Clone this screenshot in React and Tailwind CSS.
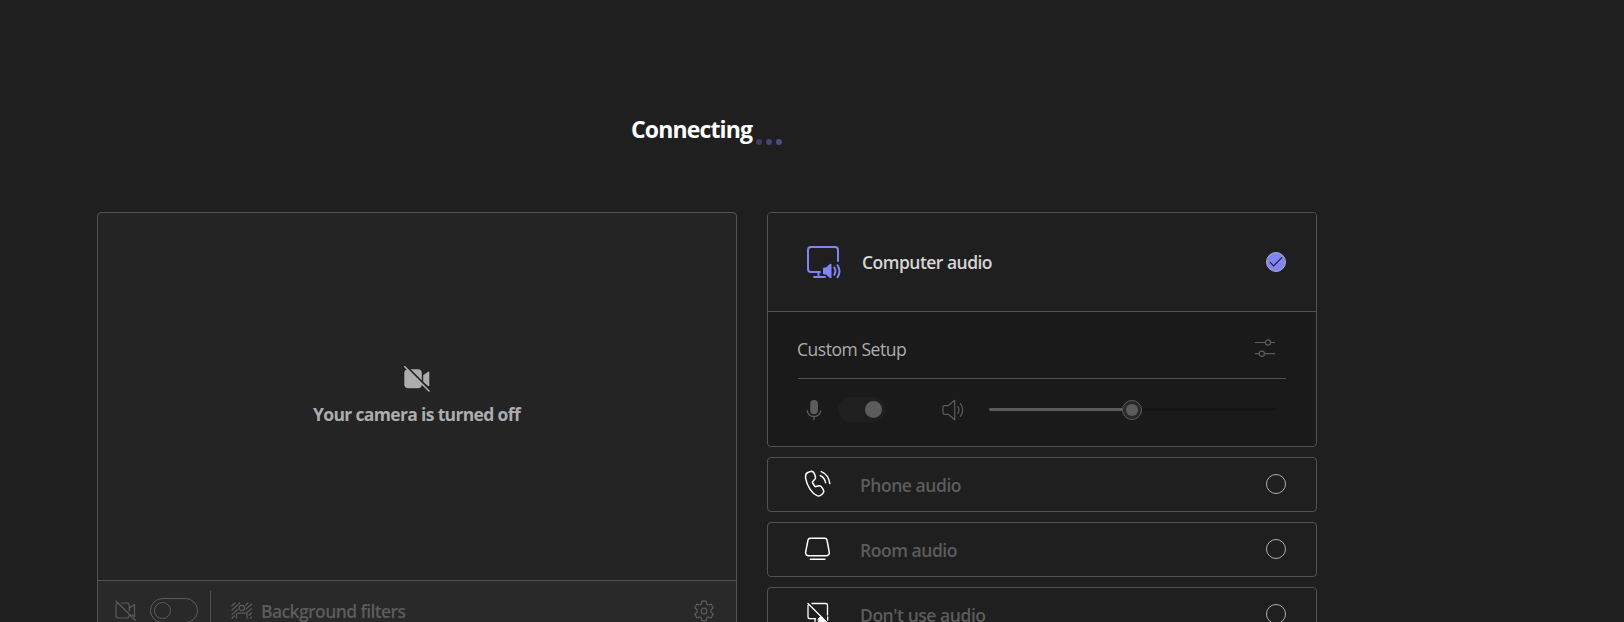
function MonitorSpeaker() {
  return (
    <svg width="34" height="34" viewBox="0 0 34 34" fill="none" stroke="#7f85f5" strokeWidth="2" strokeLinecap="round" strokeLinejoin="round">
      <path d="M31 15V4a3 3 0 0 0-3-3H4a3 3 0 0 0-3 3v19a3 3 0 0 0 3 3h9M11.5 26v5M7 31h11" />
      <path d="M17 22.5h2.5l4-3.8v12.6l-4-3.8H17z" fill="#7f85f5" />
      <path d="M27.3 21.5c1.4 2.2 1.4 5 0 7.2M30.5 19.3c2.4 3.6 2.4 8.4 0 12" />
    </svg>
  );
}

function Sliders() {
  return (
    <svg width="20" height="20" viewBox="0 0 20 20" fill="none" stroke="#5c5c5c" strokeWidth="1.2">
      <path d="M0 4.5h10.4M15.6 4.5H20M0 15.700h4.2M9.400 15.700H20" />
      <circle cx="13" cy="4.5" r="2.6" />
      <circle cx="6.8" cy="15.700" r="2.6" />
    </svg>
  );
}

function Mic() {
  return (
    <svg width="16" height="22" viewBox="0 0 16 22" fill="none">
      <rect x="4.2" y="1" width="7.8" height="14.2" rx="3.9" fill="#5c5c5c" />
      <path d="M1.2 11.2a6.8 6.3 0 0 0 13.6 0M8 17.5V21" stroke="#5c5c5c" strokeWidth="1.3" />
    </svg>
  );
}

function Speaker() {
  return (
    <svg width="22" height="22" viewBox="0 0 22 22" fill="none" stroke="#5c5c5c" strokeWidth="1.2" strokeLinejoin="round" strokeLinecap="round">
      <path d="M2.4 6.7h3.8l6.5-5.4v19.4l-6.5-5.4H2.4a1.4 1.4 0 0 1-1.4-1.4V8.1a1.4 1.4 0 0 1 1.4-1.4z" />
      <path d="M15.8 7.7c1.5 2 1.5 4.6 0 6.6M18.3 4.7c3.2 3.6 3.2 9 0 12.6" />
    </svg>
  );
}

function Phone() {
  return (
    <svg width="28" height="28" viewBox="0 0 28 28" fill="none" stroke="#fff" strokeWidth="1.5" strokeLinecap="round" strokeLinejoin="round">
      <path d="M4.300 2.200 6 1.600C8 1 9.500 1.800 10.200 3.300l1 2.600c.6 1.500.3 3-.9 4L8.900 11.300c-.4.3-.5.7-.3 1.200.5 1.400 1.200 2.600 2.200 3.700.3.400.8.500 1.200.4l2.200-.6c1.400-.4 2.700 0 3.500 1.200l1.400 2.200c.9 1.400.7 3.100-.5 4.300l-1.100 1c-1.200 1.100-2.900 1.500-4.500.9C8 23.500 3 16 1.700 8.700 1.300 6 1.800 3 4.300 2.200z" />
      <path d="M16.300 5.600c2.800 1.300 4.800 3.900 5.300 7.200M17.300 1.600c4.500 1.900 7.800 6.500 8.500 12" />
    </svg>
  );
}

function Room() {
  return (
    <svg width="28" height="28" viewBox="0 0 28 28" fill="none" stroke="#fff" strokeWidth="1.500" strokeLinecap="round" strokeLinejoin="round">
      <path d="M6.300 3.200h14.400a2.400 2.400 0 0 1 2.300 1.800l2.300 12.400a3 3 0 0 1-3 3.400H4.600a3 3 0 0 1-3-3.400L4 5a2.400 2.400 0 0 1 2.300-1.800zM6.300 24.200h14.600" />
    </svg>
  );
}

function NoAudio() {
  return (
    <svg width="28" height="28" viewBox="0 0 28 28" fill="none" stroke="#fff" strokeWidth="1.300" strokeLinecap="round" strokeLinejoin="round">
      <path d="M8 3.500h13.700a1.800 1.800 0 0 1 1.800 1.800V15M4 5.500v11.200a2 2 0 0 0 2 2h5.500M4 3.500l20 20M11 19v4.500M8 23.500h6" />
      <path d="M14.500 18.500l2.200-2 3.800 3.800v4l-3.500-2.500h-2.500z" fill="#fff" strokeWidth="0.800" />
      <path d="M23.700 17v3" />
    </svg>
  );
}

function CameraOffFilled() {
  return (
    <svg width="26" height="26" viewBox="0 0 26 26">
      <rect x="0.300" y="3.300" width="17.500" height="19" rx="4" fill="#adadad" />
      <path d="M19.200 9.300 24 5.700c.600-.4 1.300 0 1.300.7v13c0 .7-.7 1.100-1.300.7l-4.800-3.500z" fill="#adadad" />
      <path d="M2 0 26 24" stroke="#242424" strokeWidth="2" />
      <path d="M.8.8 25 25" stroke="#adadad" strokeWidth="1.600" strokeLinecap="round" />
    </svg>
  );
}

function CameraOff() {
  return (
    <svg width="22" height="22" viewBox="0 0 22 22" fill="none" stroke="#5c5c5c" strokeWidth="1.200" strokeLinecap="round" strokeLinejoin="round">
      <path d="M6.500 3h5.300a2.500 2.500 0 0 1 2.500 2.500V11M14.300 14v1.500a2.500 2.500 0 0 1-2.500 2.500H3.500A2.500 2.500 0 0 1 1 15.500v-10A2.500 2.500 0 0 1 3 3.100M14.500 8l5-3.600v12.200l-2.500-1.700M1 1l19.500 19.500" />
    </svg>
  );
}

function Filters() {
  return (
    <svg width="22" height="20" viewBox="0 0 22 20" fill="none" stroke="#5c5c5c" strokeWidth="1.200" strokeLinecap="round">
      <path d="M1 4.800 4 2M1 9.200 8.500 2M1 13.600 6.500 8.500M17 2l-2.500 2.200M20.500 3.200 15 8M20.500 7.600 16 11.500M20.500 12l-2.500 2.200M20.500 16.200l-1 .8M1 17.200l2.500-2.200" />
      <circle cx="10.800" cy="7" r="2.700" />
      <path d="M5.500 17v-3a1.800 1.800 0 0 1 1.800-1.800h7A1.800 1.800 0 0 1 16.100 14v3" />
    </svg>
  );
}

function Gear() {
  return (
    <svg width="22" height="22" viewBox="0 0 22 22" fill="none" stroke="#5c5c5c" strokeWidth="1.200" strokeLinejoin="round">
      <path d="M8.900 1.200h4.200l.7 3 1.300.8 3-.9 2.100 3.600-2.200 2.100v2.400l2.200 2.100-2.100 3.600-3-.9-1.300.8-.7 3H8.900l-.7-3-1.300-.8-3 .9-2.100-3.600L4 12.200V9.800L1.800 7.700l2.100-3.600 3 .9 1.300-.8z" />
      <circle cx="11" cy="11" r="2.900" />
    </svg>
  );
}

function Option({ icon, label }) {
  return (
    <div className="flex h-[55px] shrink-0 items-start rounded border border-[#525252] pr-[30px] pl-[36px]">
      <div className="mt-[12px] flex w-[56px]">{icon}</div>
      <span className="mt-[15px] text-[17.500px] leading-6 font-semibold tracking-[-0.450px] whitespace-nowrap text-[#5c5c5c]">{label}</span>
      <span className="mt-[16px] ml-auto size-5 rounded-full border border-[#adadad]" />
    </div>
  );
}

export default function App() {
  return (
    <div className="h-[622px] w-[1624px] overflow-hidden bg-[#1f1f1f] pl-[97px] font-['Open_Sans','Noto_Sans',sans-serif]">
      <header className="flex h-[212px] pt-[113px] pl-[534px]">
        <h1 className="h-8 text-[23px] leading-8 font-bold tracking-[-0.850px] whitespace-nowrap text-white">Connecting</h1>
        <div className="mt-[26px] ml-[4px] flex gap-1">
          <i className="h-[6px] w-[6px] rounded-full bg-[#3d3e66]" />
          <i className="h-[6px] w-[6px] rounded-full bg-[#444572]" />
          <i className="h-[6px] w-[6px] rounded-full bg-[#4b4d80]" />
        </div>
      </header>
      <main className="flex h-[410px] items-start gap-[30px]">
        <section className="flex h-[430px] w-[640px] flex-col overflow-hidden rounded border border-[#525252] bg-[#242424]">
          <div className="flex h-[367px] shrink-0 flex-col items-center pt-[153px] pr-[1px]">
            <CameraOffFilled />
            <p className="mt-[10px] text-[17.500px] leading-6 font-bold tracking-[-0.650px] whitespace-nowrap text-[#adadad]">Your camera is turned off</p>
          </div>
          <div className="flex h-[62px] items-start border-t border-[#525252] bg-[#292929] pl-[17px]">
            <div className="mt-[19px]"><CameraOff /></div>
            <div className="mt-[17px] ml-[13px] h-[25px] w-[48px] rounded-full border border-[#5c5c5c] p-[3px]">
              <div className="size-[17px] rounded-full border border-[#5c5c5c]" />
            </div>
            <div className="mt-[10px] ml-[12px] h-[52px] w-px bg-[#525252]" />
            <div className="mt-[20px] ml-[20px]"><Filters /></div>
            <span className="mt-[18px] ml-[8px] text-[17.500px] leading-6 font-semibold tracking-[-0.600px] whitespace-nowrap text-[#5c5c5c]">Background filters</span>
            <div className="mt-[19px] mr-[21px] ml-auto"><Gear /></div>
          </div>
        </section>
        <section className="flex w-[550px] flex-col gap-[10px]">
          <div className="h-[235px] shrink-0 overflow-hidden rounded border border-[#525252] bg-[#1a1a1a]">
            <div className="flex h-[99px] items-center border-b border-[#525252] bg-[#1f1f1f] pr-[30px] pl-[39px]">
              <div className="mt-[2px]"><MonitorSpeaker /></div>
              <span className="ml-[21px] text-[17.500px] font-semibold tracking-[-0.520px] whitespace-nowrap text-[#d6d6d6]">Computer audio</span>
              <span className="ml-auto flex size-5 items-center justify-center rounded-full border border-[#adadad] bg-[#7f85f5]">
                <svg width="14" height="12" viewBox="0 0 14 12" fill="none" stroke="#1f1f1f" strokeWidth="1.200"><path d="m1 6.200 3.600 3.600L13 1.400" /></svg>
              </span>
            </div>
            <div className="mx-[30px] flex h-[67px] items-center justify-between border-b border-[#525252] pr-[11px]">
              <span className="mt-[8px] -ml-px text-[17.500px] tracking-[-0.450px] text-[#adadad]">Custom Setup</span>
              <div className="mt-[6px]"><Sliders /></div>
            </div>
            <div className="flex h-[61px] items-center pr-[40px] pl-[38px]">
              <Mic />
              <div className="ml-[16px] flex h-[25px] w-[48px] items-center justify-end rounded-full bg-[#1f1f1f] pr-[4px]">
                <div className="size-[17px] rounded-full bg-[#5c5c5c]" />
              </div>
              <div className="ml-[56px]"><Speaker /></div>
              <div className="ml-[25px] flex flex-1 items-center">
                <div className="h-[3px] w-[133px] rounded-l-full bg-[#5c5c5c]" />
                <div className="flex size-5 shrink-0 items-center justify-center rounded-full border border-[#5c5c5c] bg-[#292929]">
                  <div className="size-[12px] rounded-full bg-[#5c5c5c]" />
                </div>
                <div className="h-[3px] flex-1 rounded-r-full bg-[#141414]" />
              </div>
            </div>
          </div>
          <Option icon={<Phone />} label="Phone audio" />
          <Option icon={<Room />} label="Room audio" />
          <Option icon={<NoAudio />} label="Don't use audio" />
        </section>
      </main>
    </div>
  );
}
